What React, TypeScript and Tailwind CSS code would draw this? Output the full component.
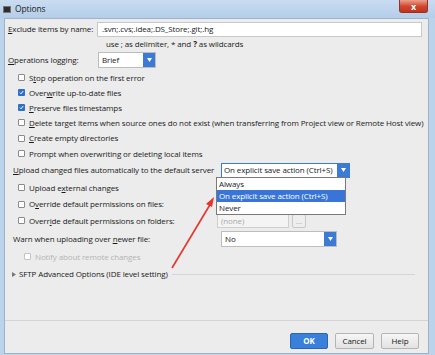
import React from 'react';

const font = { fontFamily: '"Open Sans", "Noto Sans", sans-serif' };

const U: React.FC<{ children: React.ReactNode }> = ({ children }) => (
  <span className="underline underline-offset-1">{children}</span>
);

const Check: React.FC<{ on?: boolean; disabled?: boolean }> = ({ on, disabled }) =>
  on ? (
    <span className="w-[7px] h-[7px] bg-[#2f6fc9] rounded-[1px] flex items-center justify-center shrink-0">
      <svg width="5" height="5" viewBox="0 0 5 5">
        <path d="M0.8 2.6 L2 3.8 L4.2 1" stroke="#fff" strokeWidth="1" fill="none" />
      </svg>
    </span>
  ) : (
    <span
      className={
        'w-[7px] h-[7px] rounded-[1px] bg-white border shrink-0 ' +
        (disabled ? 'border-[#c4c4c4]' : 'border-[#8a8a8a]')
      }
    />
  );

const CheckRow: React.FC<{ on?: boolean; children: React.ReactNode; h?: string }> = ({
  on,
  children,
  h = 'h-[15px]',
}) => (
  <div className={'flex items-center gap-[4px] pl-[10px] whitespace-nowrap ' + h}>
    <Check on={on} />
    <span>{children}</span>
  </div>
);

const Arrow = () => (
  <span className="w-[12px] h-full bg-[#3b7bd3] flex items-center justify-center">
    <svg width="5" height="4" viewBox="0 0 5 4">
      <path d="M0 0 H5 L2.5 4 Z" fill="#fff" />
    </svg>
  </span>
);

export default function App() {
  return (
    <div
      className="w-[435px] h-[355px] bg-[#bcd3ec] relative overflow-hidden text-[8px] tracking-[-0.12px] text-[#1a1a1a] whitespace-nowrap"
      style={font}
    >
      {/* title bar */}
      <div className="h-[18px] flex items-center bg-gradient-to-b from-[#c9dcf1] to-[#b4cde9] pl-[3px] relative">
        <span className="w-[8px] h-[7px] bg-[#2c2c2c] border border-[#777] mr-[4px]" />
        <span className="text-[8.5px] text-[#222]">Options</span>
        <div className="absolute right-[7px] top-0 w-[29px] h-[13px] bg-gradient-to-b from-[#e8a08e] via-[#d3482f] to-[#c3301a] rounded-b-[3px] flex items-center justify-center border border-[#8e3526] border-t-0">
          <span className="text-white text-[9px] font-bold leading-none">x</span>
        </div>
      </div>

      {/* content */}
      <div className="absolute left-[4px] right-[6px] top-[18px] bottom-[1px] bg-[#ececec] border border-[#9fb3c8] flex flex-col">
        <div className="flex flex-col pl-[3px] pt-[2px]">
          <div className="flex items-center h-[16px]">
            <span className="w-[89px]">
              <U>E</U>xclude items by name:
            </span>
            <div className="flex-1 h-[15px] bg-white border border-[#c8c8c8] mr-[6px] flex items-center pl-[4px]">
              .svn;.cvs;.idea;.DS_Store;.git;.hg
            </div>
          </div>
          <div className="h-[14px] flex items-center pl-[98px]">
            use ; as delimiter, * and <b className="mx-[2px]">?</b> as wildcards
          </div>
          <div className="flex items-center h-[17px]">
            <span className="w-[90px]">
              <U>O</U>perations logging:
            </span>
            <div className="w-[58px] h-[16px] bg-white border border-[#bdbdbd] flex items-center justify-between">
              <span className="pl-[3px]">Brief</span>
              <Arrow />
            </div>
          </div>
          <div className="h-[2px]" />
          <CheckRow>
            S<U>t</U>op operation on the first error
          </CheckRow>
          <CheckRow on>
            Over<U>w</U>rite up-to-date files
          </CheckRow>
          <CheckRow on>
            <U>P</U>reserve files timestamps
          </CheckRow>
          <CheckRow>
            <U>D</U>elete target items when source ones do not exist (when transferring from Project view or Remote Host view)
          </CheckRow>
          <CheckRow h="h-[16px]">
            <U>C</U>reate empty directories
          </CheckRow>
          <CheckRow>Prompt when overwriting or deleting local items</CheckRow>
          <div className="flex items-center h-[18px] pl-[5px]">
            <span className="w-[208px]">
              <U>U</U>pload changed files automatically to the default server
            </span>
            <div className="w-[129px] h-[15px] bg-white border border-[#3b7bd3] flex items-center justify-between">
              <span className="pl-[2px]">On explicit save action (Ctrl+S)</span>
              <Arrow />
            </div>
          </div>
          <CheckRow h="h-[17px]">
            Upload e<U>x</U>ternal changes
          </CheckRow>
          <CheckRow h="h-[16px]">
            O<U>v</U>erride default permissions on files:
          </CheckRow>
          <div className="flex items-center h-[17px] pl-[10px]">
            <div className="flex items-center gap-[4px] w-[199px]">
              <Check />
              <span>
                Overr<U>i</U>de default permissions on folders:
              </span>
            </div>
            <div className="w-[72px] h-[14px] bg-[#f4f4f4] border border-[#cfcfcf] text-[#a8a8a8] flex items-center pl-[3px]">
              (none)
            </div>
            <div className="w-[14px] h-[14px] ml-[3px] bg-[#eeeeee] border border-[#c8c8c8] rounded-[2px] flex items-center justify-center text-[#aaa] leading-none">
              ...
            </div>
          </div>
          <div className="flex items-center h-[19px] pl-[5px]">
            <span className="w-[208px]">
              Warn when uploading over <U>n</U>ewer file:
            </span>
            <div className="w-[116px] h-[16px] bg-white border border-[#bdbdbd] flex items-center justify-between">
              <span className="pl-[3px]">No</span>
              <Arrow />
            </div>
          </div>
          <div className="flex items-center gap-[4px] h-[17px] pl-[16px] text-[#b4b4b4]">
            <Check disabled />
            <span>Notify about remote changes</span>
          </div>
          <div className="flex items-center h-[18px] pl-[4px]">
            <svg width="4" height="5" viewBox="0 0 4 5" className="mr-[3px]">
              <path d="M0 0 L4 2.5 L0 5 Z" fill="#777" />
            </svg>
            <span>SFTP Advanced Options (IDE level setting)</span>
            <div className="flex-1 h-px bg-[#d6d6d6] ml-[4px] mr-[13px]" />
          </div>
        </div>
        <div className="flex-1" />
        <div className="border-t border-[#d4d4d4] h-[33px] flex items-start justify-end gap-[7px] pr-[9px] pt-[12px]">
          <div className="w-[38px] h-[16px] bg-[#3a7fd9] border border-[#2a66b8] rounded-[2px] text-white font-bold flex items-center justify-center">
            OK
          </div>
          <div className="w-[39px] h-[16px] bg-gradient-to-b from-[#f6f6f6] to-[#e2e2e2] border border-[#b4b4b4] rounded-[2px] flex items-center justify-center">
            Cancel
          </div>
          <div className="w-[38px] h-[16px] bg-gradient-to-b from-[#f6f6f6] to-[#e2e2e2] border border-[#b4b4b4] rounded-[2px] flex items-center justify-center">
            Help
          </div>
        </div>
      </div>

      {/* opened dropdown popup */}
      <div className="absolute left-[216px] top-[177px] w-[130px] bg-white border border-[#7a7a7a] flex flex-col">
        <div className="h-[12px] flex items-center pl-[2px]">Always</div>
        <div className="h-[12px] flex items-center pl-[2px] bg-[#3875d7] text-white">
          On explicit save action (Ctrl+S)
        </div>
        <div className="h-[12px] flex items-center pl-[2px]">Never</div>
      </div>

      {/* red annotation arrow */}
      <svg className="absolute left-0 top-0 pointer-events-none" width="435" height="355">
        <line x1="172" y1="268" x2="211" y2="203" stroke="#e8322d" strokeWidth="1.6" />
        <path d="M214 197 L206 204 L212 207 Z" fill="#e8322d" />
      </svg>
    </div>
  );
}
